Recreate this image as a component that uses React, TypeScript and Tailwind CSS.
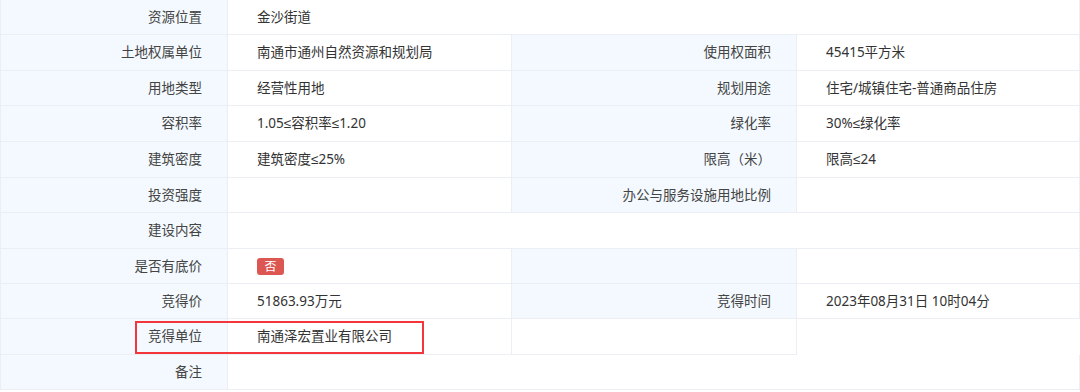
import React from "react";

type Cell = { text?: React.ReactNode; label?: boolean; span?: number; white?: boolean };

const Le = () => <span style={{ fontFamily: '"Liberation Sans", "DejaVu Sans", sans-serif' }}>≤</span>;

const rows: { h: string; cells: Cell[] }[] = [
  { h: "h-[35px]", cells: [{ text: "资源位置", label: true }, { text: "金沙街道", span: 3 }] },
  {
    h: "h-[36px]",
    cells: [
      { text: "土地权属单位", label: true },
      { text: "南通市通州自然资源和规划局" },
      { text: "使用权面积", label: true },
      { text: "45415平方米" },
    ],
  },
  {
    h: "h-[35px]",
    cells: [
      { text: "用地类型", label: true },
      { text: "经营性用地" },
      { text: "规划用途", label: true },
      { text: "住宅/城镇住宅-普通商品住房" },
    ],
  },
  {
    h: "h-[36px]",
    cells: [
      { text: "容积率", label: true },
      { text: <>1.05<Le />容积率<Le />1.20</> },
      { text: "绿化率", label: true },
      { text: <>30%<Le />绿化率</> },
    ],
  },
  {
    h: "h-[36px]",
    cells: [
      { text: "建筑密度", label: true },
      { text: <>建筑密度<Le />25%</> },
      { text: "限高（米）", label: true },
      { text: <>限高<Le />24</> },
    ],
  },
  {
    h: "h-[35px]",
    cells: [
      { text: "投资强度", label: true },
      { text: "" },
      { text: "办公与服务设施用地比例", label: true },
      { text: "" },
    ],
  },
  { h: "h-[36px]", cells: [{ text: "建设内容", label: true }, { text: "", span: 3 }] },
  {
    h: "h-[35px]",
    cells: [
      { text: "是否有底价", label: true },
      {
        text: (
          <span className="inline-flex h-[17px] w-[27px] items-center justify-center rounded-[3px] bg-[#dc5652] text-[12px] leading-none text-white">
            否
          </span>
        ),
      },
      { text: "", label: true },
      { text: "" },
    ],
  },
  {
    h: "h-[35px]",
    cells: [
      { text: "竞得价", label: true },
      { text: "51863.93万元" },
      { text: "竞得时间", label: true },
      { text: "2023年08月31日 10时04分" },
    ],
  },
  {
    h: "h-[36px]",
    cells: [
      { text: "竞得单位", label: true },
      { text: "南通泽宏置业有限公司" },
      { text: "", white: true },
    ],
  },
  { h: "h-[35px]", cells: [{ text: "备注", label: true }, { text: "", span: 3 }] },
];

export default function App() {
  return (
    <div
      className="relative h-[392px] w-[1080px] overflow-hidden bg-white text-[13.5px] text-[#333]"
      style={{ fontFamily: '"Noto Sans", "Noto Sans CJK SC", sans-serif' }}
    >
      <div className="border-l border-[#ebeef3]">
        {rows.map((r, i) => (
          <div key={i} className={`grid grid-cols-[227px_284px_285px_1fr] ${r.h}`}>
            {r.cells.map((c, j) => {
              const span = c.span === 3 ? "col-span-3" : "";
              if (c.label) {
                return (
                  <div
                    key={j}
                    className={`flex items-center justify-end border-b border-r border-[#ebeef3] bg-[#f3f9fe] pr-[25px] text-[#444] ${span}`}
                  >
                    {c.text}
                  </div>
                );
              }
              return (
                <div
                  key={j}
                  className={`flex items-center border-b border-r border-[#ebeef3] bg-white pl-[29px] ${span}`}
                >
                  <span>{c.text}</span>
                </div>
              );
            })}
          </div>
        ))}
      </div>
      <div className="pointer-events-none absolute left-[135px] top-[321px] h-[33px] w-[289px] border-2 border-[#f2363c]" />
    </div>
  );
}
